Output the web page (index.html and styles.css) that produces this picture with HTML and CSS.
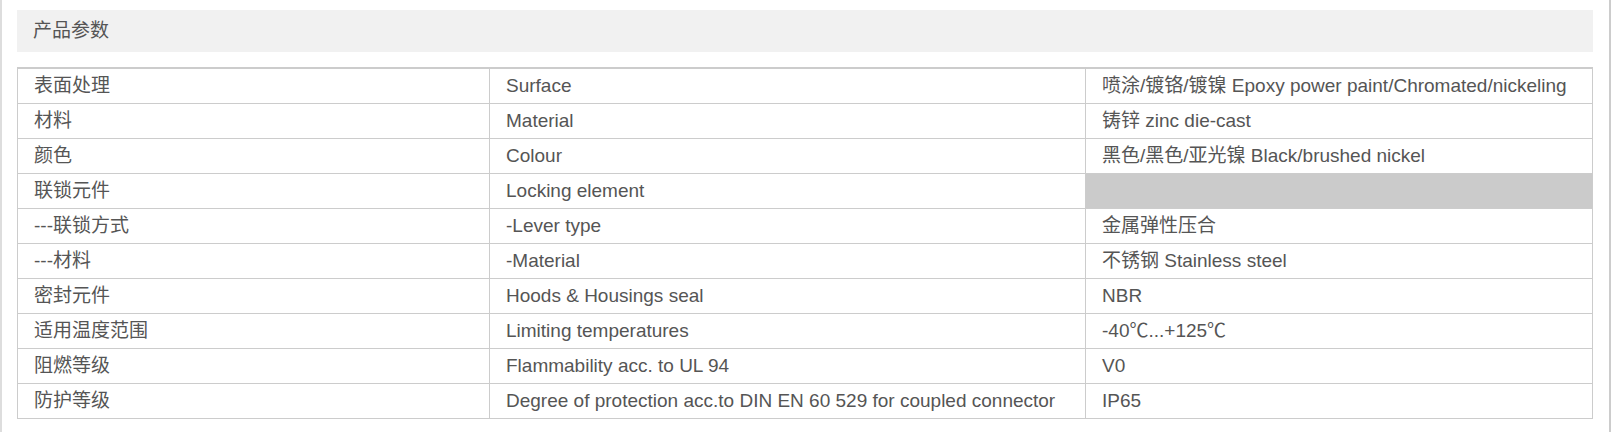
FILE: index.html
```html
<!DOCTYPE html>
<html lang="zh-CN">
<head>
<meta charset="utf-8">
<title>产品参数</title>
<link rel="stylesheet" href="styles.css">
</head>
<body>
<div class="page">
  <div class="main">
    <div class="section-title">产品参数</div>
    <table class="params">
      <colgroup>
        <col class="c1">
        <col class="c2">
        <col class="c3">
      </colgroup>
      <tbody>
        <tr><td>表面处理</td><td>Surface</td><td>喷涂/镀铬/镀镍 Epoxy power paint/Chromated/nickeling</td></tr>
        <tr><td>材料</td><td>Material</td><td>铸锌 zinc die-cast</td></tr>
        <tr><td>颜色</td><td>Colour</td><td>黑色/黑色/亚光镍 Black/brushed nickel</td></tr>
        <tr><td>联锁元件</td><td>Locking element</td><td class="empty"></td></tr>
        <tr><td>---联锁方式</td><td>-Lever type</td><td>金属弹性压合</td></tr>
        <tr><td>---材料</td><td>-Material</td><td>不锈钢 Stainless steel</td></tr>
        <tr><td>密封元件</td><td>Hoods &amp; Housings seal</td><td>NBR</td></tr>
        <tr><td>适用温度范围</td><td>Limiting temperatures</td><td>-40℃...+125℃</td></tr>
        <tr><td>阻燃等级</td><td>Flammability acc. to UL 94</td><td>V0</td></tr>
        <tr><td>防护等级</td><td>Degree of protection acc.to DIN EN 60 529 for coupled connector</td><td>IP65</td></tr>
      </tbody>
    </table>
  </div>
  <div class="scrollbar"></div>
</div>
</body>
</html>
```

FILE: styles.css
```css
html, body {
  margin: 0;
  padding: 0;
  background: #ffffff;
}

body {
  font-family: "Liberation Sans", "Noto Sans CJK SC", Arial, sans-serif;
  font-size: 19px;
  color: #555555;
}

.page {
  display: flex;
  height: 432px;
  overflow: hidden;
}

.main {
  flex: 1;
  border-left: 2px solid #dddddd;
  padding: 10px 16px 0 15px;
}

.scrollbar {
  width: 3px;
  background: #cccccc;
}

.section-title {
  height: 42px;
  line-height: 42px;
  padding-left: 16px;
  background: #f1f1f1;
  color: #555555;
  margin-bottom: 15px;
}

.params {
  width: 1575px;
  table-layout: fixed;
  border-collapse: collapse;
  border-top: 2px solid #cccccc;
}

.params .c1 { width: 472px; }
.params .c2 { width: 596px; }
.params .c3 { width: 507px; }

.params td {
  height: 34px;
  padding: 0 0 0 16px;
  border: 1px solid #cccccc;
  vertical-align: middle;
  line-height: 20px;
  white-space: nowrap;
  overflow: hidden;
}

.params tr:first-child td {
  border-top: 2px solid #cccccc;
}

.params td.empty {
  background: #cbcbcb;
}
```
